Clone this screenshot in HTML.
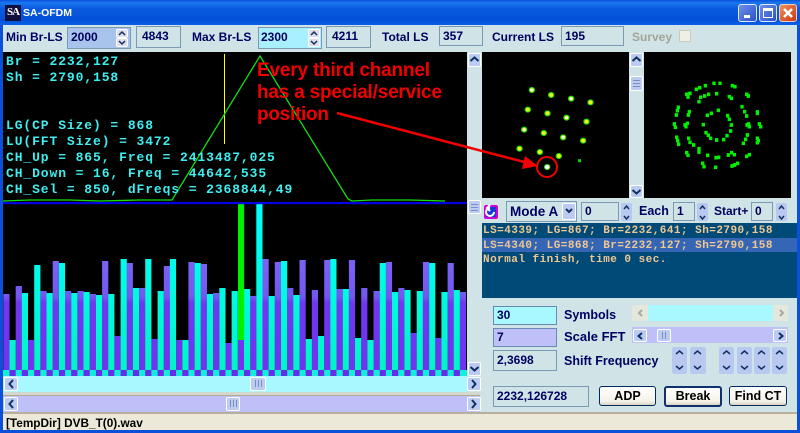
<!DOCTYPE html>
<html><head><meta charset="utf-8"><style>
html,body{margin:0;padding:0;background:#0a50d8}
#w{position:relative;width:800px;height:433px;overflow:hidden;background:#d0e4e8;font:bold 12px "Liberation Sans",sans-serif;color:#000060}
#w div,#w svg{position:absolute}
.t{white-space:nowrap;line-height:14px}
.f{box-sizing:border-box;border:1px solid #7a9ab4;padding-left:5px;white-space:nowrap}
.b{box-sizing:border-box;border:1px solid #fff;border-radius:2px;background:#bccbf2}
.sp{box-sizing:border-box;background:#b8c8f0;border-radius:2px}
.btn{box-sizing:border-box;border:1px solid #002a5c;border-radius:3px;background:linear-gradient(#fff,#f4f2e8 80%,#d8d4c4);color:#000;text-align:center;line-height:19px;font-size:12.5px}
.m{font:bold 13px "Liberation Mono",monospace;letter-spacing:.9px;color:#40eef0;white-space:pre;line-height:16px}
.l{font:bold 11px "Liberation Mono",monospace;letter-spacing:.47px;color:#f0c890;white-space:pre;line-height:14px}
</style></head><body><div id="w">
<div style="left:0;top:0;width:800px;height:25px;background:linear-gradient(#0a50d8 0,#1a78f0 3px,#0a5ce0 8px,#0450d8 20px,#0a60e8 25px)"></div>
<div style="left:0;top:25px;width:3px;height:408px;background:#0a50d8"></div>
<div style="left:797px;top:25px;width:3px;height:408px;background:#0a50d8"></div>
<div style="left:0;top:430px;width:800px;height:3px;background:#0a50d8"></div>
<div style="left:5px;top:5px;width:16px;height:16px;background:#101040;color:#fff;font:bold 11px 'Liberation Serif',serif;line-height:15px;text-align:center;letter-spacing:-1px">SA</div>
<div class="t" style="left:23px;top:6px;color:#fff;font-size:10.5px">SA-OFDM</div>
<div style="left:738px;top:4px;width:19px;height:18px;box-sizing:border-box;border:1px solid #dfe8fb;border-radius:3px;background:linear-gradient(135deg,#6f90ea,#2a50c8)"></div>
<div style="left:744px;top:15px;width:6px;height:3px;background:#fff"></div>
<div style="left:759px;top:4px;width:18px;height:18px;box-sizing:border-box;border:1px solid #dfe8fb;border-radius:3px;background:linear-gradient(135deg,#6f90ea,#2a50c8)"></div>
<div style="left:763px;top:8px;width:10px;height:10px;box-sizing:border-box;border:1px solid #fff;border-top-width:3px"></div>
<div style="left:779px;top:4px;width:18px;height:18px;box-sizing:border-box;border:1px solid #f0d0b8;border-radius:3px;background:linear-gradient(135deg,#f09060,#c83a10)"></div>

<div class="t" style="left:6px;top:30px">Min Br-LS</div>
<div class="f" style="left:67px;top:27px;width:64px;height:22px;background:#a8c4ec;line-height:18px;padding-left:3px">2000</div>
<div class="f" style="left:136px;top:26px;width:45px;height:22px;background:#d0e4e8;line-height:19px">4843</div>
<div class="t" style="left:192px;top:30px">Max Br-LS</div>
<div class="f" style="left:258px;top:27px;width:64px;height:22px;background:#a8f0ff;line-height:18px;padding-left:2px">2300</div>
<div class="f" style="left:326px;top:26px;width:45px;height:22px;background:#d0e4e8;line-height:19px">4211</div>
<div class="t" style="left:382px;top:30px">Total LS</div>
<div class="f" style="left:439px;top:26px;width:44px;height:20px;line-height:18px;padding-left:3px">357</div>
<div class="t" style="left:492px;top:30px">Current LS</div>
<div class="f" style="left:561px;top:26px;width:63px;height:20px;line-height:18px;padding-left:3px">195</div>
<div class="t" style="left:632px;top:30px;color:#a4a498">Survey</div>
<div style="left:679px;top:30px;width:12px;height:12px;box-sizing:border-box;border:1px solid #c8ccc0;background:#eef0e4"></div>
<div class="b" style="left:116px;top:29px;width:12px;height:9px;background:#dde"></div>
<div class="b" style="left:116px;top:38px;width:12px;height:9px;background:#dde"></div>
<div class="b" style="left:308px;top:29px;width:12px;height:9px;background:#dde"></div>
<div class="b" style="left:308px;top:38px;width:12px;height:9px;background:#dde"></div>

<!-- main plots -->
<div style="left:3px;top:52px;width:464px;height:152px;background:#000"></div>
<div style="left:3px;top:204px;width:464px;height:166px;background:#000"></div>
<svg style="left:0;top:0" width="800" height="433">
<defs>
<linearGradient id="pg" gradientUnits="userSpaceOnUse" x1="0" y1="255" x2="0" y2="370"><stop offset="0" stop-color="#7a64f4"/><stop offset=".36" stop-color="#7458f0"/><stop offset=".42" stop-color="#7036f0"/><stop offset="1" stop-color="#7034f0"/></linearGradient>
<linearGradient id="cg" gradientUnits="userSpaceOnUse" x1="0" y1="204" x2="0" y2="370"><stop offset="0" stop-color="#00ffff"/><stop offset=".55" stop-color="#00fae0"/><stop offset="1" stop-color="#00f4c8"/></linearGradient>
</defs>
<path fill="url(#pg)" d="M3.3 294V370h6.2V294zM15.7 286V370h6.2V286zM28 340V370h6.2V340zM40.4 291V370h6.2V291zM52.7 261V370h6.2V261zM65 291V370h6.2V291zM77.4 291V370h6.2V291zM89.7 294V370h6.2V294zM102.1 261V370h6.2V261zM114.4 336V370h6.2V336zM126.7 263V370h6.2V263zM139.1 288V370h6.2V288zM151.4 339V370h6.2V339zM163.8 266V370h6.2V266zM176.1 340V370h6.2V340zM188.4 262V370h6.2V262zM200.8 264V370h6.2V264zM213.1 293V370h6.2V293zM225.5 343V370h6.2V343zM237.8 340V370h6.2V340zM250.1 296V370h6.2V296zM262.5 259V370h6.2V259zM274.8 262V370h6.2V262zM287.2 288V370h6.2V288zM299.5 260V370h6.2V260zM311.8 290V370h6.2V290zM324.2 260V370h6.2V260zM336.5 289V370h6.2V289zM348.9 260V370h6.2V260zM361.2 288V370h6.2V288zM373.5 291V370h6.2V291zM385.9 262V370h6.2V262zM398.2 288V370h6.2V288zM410.6 333V370h6.2V333zM422.9 262V370h6.2V262zM435.2 338V370h6.2V338zM447.6 263V370h6.2V263zM459.9 292V370h6.2V292z"/>
<path fill="url(#cg)" d="M9.5 340V370h6.2V340zM21.8 293V370h6.2V293zM34.2 265V370h6.2V265zM46.5 293V370h6.2V293zM58.9 263V370h6.2V263zM71.2 293V370h6.2V293zM83.5 292V370h6.2V292zM95.9 295V370h6.2V295zM108.2 294V370h6.2V294zM120.6 259V370h6.2V259zM132.9 288V370h6.2V288zM145.2 259V370h6.2V259zM157.6 291V370h6.2V291zM169.9 259V370h6.2V259zM182.3 340V370h6.2V340zM194.6 263V370h6.2V263zM206.9 294V370h6.2V294zM219.3 288V370h6.2V288zM231.6 291V370h6.2V291zM244 289V370h6.2V289zM256.3 204V370h6.2V204zM268.6 296V370h6.2V296zM281 261V370h6.2V261zM293.3 295V370h6.2V295zM305.7 339V370h6.2V339zM318 336V370h6.2V336zM330.3 259V370h6.2V259zM342.7 289V370h6.2V289zM355 338V370h6.2V338zM367.4 340V370h6.2V340zM379.7 263V370h6.2V263zM392 292V370h6.2V292zM404.4 290V370h6.2V290zM416.7 291V370h6.2V291zM429.1 263V370h6.2V263zM441.4 292V370h6.2V292zM453.7 290V370h6.2V290z"/>
<rect x="238" y="204" width="6.2" height="136" fill="#00f000"/>
<!-- checker -->
<rect x="3" y="370" width="464" height="6" fill="#10f0d8"/>
<path fill="#6a2ce8" d="M9.5 370h6.2v6h-6.2zM21.8 370h6.2v6h-6.2zM34.2 370h6.2v6h-6.2zM46.5 370h6.2v6h-6.2zM58.9 370h6.2v6h-6.2zM71.2 370h6.2v6h-6.2zM83.5 370h6.2v6h-6.2zM95.9 370h6.2v6h-6.2zM108.2 370h6.2v6h-6.2zM120.6 370h6.2v6h-6.2zM132.9 370h6.2v6h-6.2zM145.2 370h6.2v6h-6.2zM157.6 370h6.2v6h-6.2zM169.9 370h6.2v6h-6.2zM182.3 370h6.2v6h-6.2zM194.6 370h6.2v6h-6.2zM206.9 370h6.2v6h-6.2zM219.3 370h6.2v6h-6.2zM231.6 370h6.2v6h-6.2zM244 370h6.2v6h-6.2zM256.3 370h6.2v6h-6.2zM268.6 370h6.2v6h-6.2zM281 370h6.2v6h-6.2zM293.3 370h6.2v6h-6.2zM305.7 370h6.2v6h-6.2zM318 370h6.2v6h-6.2zM330.3 370h6.2v6h-6.2zM342.7 370h6.2v6h-6.2zM355 370h6.2v6h-6.2zM367.4 370h6.2v6h-6.2zM379.7 370h6.2v6h-6.2zM392 370h6.2v6h-6.2zM404.4 370h6.2v6h-6.2zM416.7 370h6.2v6h-6.2zM429.1 370h6.2v6h-6.2zM441.4 370h6.2v6h-6.2zM453.7 370h6.2v6h-6.2z"/>
<rect x="3" y="202" width="464" height="2.2" fill="#0000e0"/>
<line x1="224.5" y1="54" x2="224.5" y2="144" stroke="#ffff00" stroke-width="1"/>
<polyline fill="none" stroke="#10e010" stroke-width="1.3" points="3,201 30,200 70,200 100,201 140,200 172,200 260,56 348,199 352,201 372,200 410,200 445,201"/>
</svg>
<div class="m" style="left:6px;top:54px">Br = 2232,127
Sh = 2790,158


LG(CP Size) = 868
LU(FFT Size) = 3472
CH_Up = 865, Freq = 2413487,025
CH_Down = 16, Freq = 44642,535
CH_Sel = 850, dFreqs = 2368844,49</div>

<!-- vertical scrollbars -->
<div style="left:467px;top:52px;width:14px;height:324px;background:#d0e4e8"></div>
<div class="b" style="left:468px;top:53px;width:13px;height:14px"></div>
<div class="b" style="left:468px;top:200px;width:13px;height:14px"></div>
<div class="b" style="left:468px;top:362px;width:13px;height:14px"></div>
<div style="left:629px;top:52px;width:15px;height:146px;background:#d0e4e8"></div>
<div class="b" style="left:630px;top:53px;width:13px;height:14px"></div>
<div class="b" style="left:630px;top:76px;width:13px;height:15px"></div>
<div class="b" style="left:630px;top:185px;width:13px;height:13px"></div>

<!-- constellations -->
<div style="left:482px;top:52px;width:147px;height:146px;background:#000"></div>
<div style="left:644px;top:52px;width:147px;height:146px;background:#000"></div>
<svg style="left:480px;top:50px" width="320" height="150" viewBox="0 0 960 450">
<path fill="none" stroke="#20e000" stroke-width="18" stroke-linecap="round" d="M155 120h1M213 135h1M273 146h1M331 157h1M143 179h1M202 190h1M259 203h1M319 215h1M132 239h1M191 249h1M249 262h1M309 272h1M118 296h1M179 306h1M236 318h1M201 351h1"/>
<path fill="none" stroke="#f0f020" stroke-width="11" stroke-linecap="round" d="M155 120h1M213 135h1M273 146h1M331 157h1M143 179h1M202 190h1M259 203h1M319 215h1M132 239h1M191 249h1M249 262h1M309 272h1M118 296h1M179 306h1M236 318h1"/>
<path fill="none" stroke="#ffffff" stroke-width="8" stroke-linecap="round" d="M155 120h1M273 146h1M259 203h1M249 262h1M132 239h1"/>
<path fill="none" stroke="#ffffff" stroke-width="13" stroke-linecap="round" d="M201 351h1"/>
<path fill="none" stroke="#10d010" stroke-width="9" d="M294 332h9"/>
<path fill="none" stroke="#00f000" stroke-width="11" d="M697 100h10M715 100h10M671 107h10M654 113h10M644 118h10M752 107h10M760 110h10M615 133h10M625 130h10M619 141h10M669 138h10M681 133h10M705 131h10M795 133h10M800 138h10M743 140h10M749 145h10M652 155h10M657 142h10M781 170h10M789 185h10M795 198h10M827 186h10M827 190h10M710 181h10M677 196h10M689 190h10M623 185h10M620 195h10M590 172h10M587 182h10M584 195h10M738 197h10M743 208h10M749 225h10M578 222h10M581 232h10M610 225h10M617 220h10M613 230h10M665 224h10M796 225h10M803 230h10M801 222h10M833 222h10M837 230h10M673 248h10M680 256h10M687 265h10M747 243h10M736 257h10M726 269h10M705 270h10M585 262h10M588 272h10M591 283h10M621 265h10M625 277h10M636 285h10M797 255h10M792 268h10M785 280h10M827 265h10M830 272h10M827 278h10M652 296h10M652 306h10M615 308h10M619 316h10M678 316h10M703 323h10M711 322h10M740 315h10M750 308h10M758 314h10M795 319h10M803 314h10M663 340h10M667 350h10M702 352h10M751 348h10M759 345h10M768 340h10"/>
</svg>

<!-- middle control row -->
<div style="left:484px;top:205px;width:14px;height:14px;box-sizing:border-box;border:2px solid #d000d0;background:#1838d8;border-radius:2px"></div>
<div class="f" style="left:506px;top:201px;width:71px;height:21px;background:#d0e4e8;line-height:19px;font-size:13.5px;padding-left:3px">Mode A</div>
<div class="b" style="left:562px;top:203px;width:14px;height:17px"></div>
<div class="f" style="left:581px;top:202px;width:38px;height:19px;line-height:17px;padding-left:3px">0</div>
<div class="sp" style="left:621px;top:203px;width:11px;height:18px"></div>
<div class="t" style="left:639px;top:204px;font-size:12.5px">Each</div>
<div class="f" style="left:673px;top:202px;width:22px;height:19px;line-height:17px;padding-left:3px">1</div>
<div class="sp" style="left:697px;top:203px;width:11px;height:18px"></div>
<div class="t" style="left:714px;top:204px">Start+</div>
<div class="f" style="left:751px;top:202px;width:22px;height:19px;line-height:17px;padding-left:3px">0</div>
<div class="sp" style="left:776px;top:203px;width:11px;height:18px"></div>

<!-- log -->
<div style="left:482px;top:223px;width:315px;height:75px;background:#004a78"></div>
<div style="left:482px;top:238px;width:315px;height:14px;background:#3565b5"></div>
<div class="l" style="left:483px;top:224px">LS=4339; LG=867; Br=2232,641; Sh=2790,158</div>
<div class="l" style="left:483px;top:239px">LS=4340; LG=868; Br=2232,127; Sh=2790,158</div>
<div class="l" style="left:483px;top:253px">Normal finish, time 0 sec.</div>

<!-- bottom right -->
<div class="f" style="left:493px;top:306px;width:64px;height:19px;background:#a8f8ff;border-color:#6a8ab4;line-height:17px;padding-left:3px">30</div>
<div class="f" style="left:493px;top:328px;width:64px;height:19px;background:#c0c0f8;border-color:#6a8ab4;line-height:17px;padding-left:3px">7</div>
<div class="f" style="left:493px;top:350px;width:64px;height:21px;line-height:18px;padding-left:3px">2,3698</div>
<div class="f" style="left:493px;top:386px;width:96px;height:21px;line-height:19px;padding-left:3px">2232,126728</div>
<div class="t" style="left:564px;top:308px;font-size:12.5px">Symbols</div>
<div class="t" style="left:564px;top:330px;font-size:13px">Scale FFT</div>
<div class="t" style="left:564px;top:354px;font-size:12.5px">Shift Frequency</div>
<div style="left:632px;top:305px;width:156px;height:16px;background:#e4e8dc"></div>
<div style="left:648px;top:305px;width:125px;height:16px;background:#a8f8ff"></div>
<div style="left:632px;top:327px;width:156px;height:16px;background:#c0c0f8"></div>
<div class="b" style="left:633px;top:329px;width:14px;height:13px"></div>
<div class="b" style="left:657px;top:329px;width:14px;height:13px"></div>
<div class="b" style="left:773px;top:329px;width:14px;height:13px"></div>
<div class="sp" style="left:672px;top:347px;width:15px;height:27px"></div>
<div class="sp" style="left:690px;top:347px;width:16px;height:27px"></div>
<div class="sp" style="left:719px;top:347px;width:15px;height:27px"></div>
<div class="sp" style="left:737px;top:347px;width:15px;height:27px"></div>
<div class="sp" style="left:754px;top:347px;width:16px;height:27px"></div>
<div class="sp" style="left:772px;top:347px;width:15px;height:27px"></div>
<div class="btn" style="left:599px;top:386px;width:57px;height:20px">ADP</div>
<div class="btn" style="left:664px;top:386px;width:58px;height:21px;border-width:2px;border-color:#103070;line-height:17px">Break</div>
<div class="btn" style="left:729px;top:386px;width:58px;height:20px">Find CT</div>

<!-- horizontal scrolls -->
<div style="left:3px;top:376px;width:464px;height:16px;background:#a8f8ff"></div>
<div style="left:3px;top:392px;width:477px;height:4px;background:#d0d8d0;border-bottom:1px solid #b8a890;box-sizing:border-box"></div>
<div style="left:3px;top:396px;width:477px;height:16px;background:#c0c0f8"></div>
<div class="b" style="left:4px;top:377px;width:14px;height:14px"></div>
<div class="b" style="left:250px;top:377px;width:16px;height:14px"></div>
<div class="b" style="left:467px;top:377px;width:14px;height:14px"></div>
<div class="b" style="left:4px;top:397px;width:14px;height:14px"></div>
<div class="b" style="left:226px;top:397px;width:14px;height:14px"></div>
<div class="b" style="left:467px;top:397px;width:14px;height:14px"></div>

<!-- status -->
<div style="left:3px;top:412px;width:794px;height:2px;background:#b8b09c"></div>
<div style="left:3px;top:414px;width:794px;height:16px;background:#ece9d8"></div>
<div class="t" style="left:6px;top:416px;color:#000;font-size:11.8px">[TempDir] DVB_T(0).wav</div>

<!-- chevrons -->
<svg style="left:0;top:0" width="800" height="433">
<path fill="none" stroke="#103060" stroke-width="2" d="M470.5 61l4-3.500 4 3.500M632.5 61l4-3.500 4 3.500M470.5 367l4 3.500 4-3.500M632.5 190l4 3.500 4-3.500M13 380l-3.500 4 3.500 4M13 400l-3.500 4 3.500 4M472 380l3.500 4-3.500 4M472 400l3.500 4-3.500 4M566 209l3 3 3-3M642 333l-3.500 3 3.500 3M779 333l3.500 3-3.500 3"/>
<path fill="none" stroke="#a8a8a0" stroke-width="2" d="M642 310l-3 3 3 3M780 310l3 3-3 3"/>
<path fill="none" stroke="#103060" stroke-width="1.5" d="M119 35l3-3 3 3M119 41l3 3 3-3M311 35l3-3 3 3M311 41l3 3 3-3M624 209l2.500-3 2.500 3M624 216l2.500 3 2.500-3M700 209l2.500-3 2.500 3M700 216l2.500 3 2.500-3M779 209l2.500-3 2.500 3M779 216l2.500 3 2.500-3M676 354l3.500-3 3.500 3M676 366l3.500 3 3.500-3M694 354l3.500-3 3.500 3M694 366l3.500 3 3.500-3M723 354l3.500-3 3.500 3M723 366l3.500 3 3.500-3M741 354l3.500-3 3.500 3M741 366l3.500 3 3.500-3M758 354l3.500-3 3.500 3M758 366l3.500 3 3.500-3M776 354l3.500-3 3.500 3M776 366l3.500 3 3.500-3"/>
<path fill="none" stroke="#7a8cc0" stroke-width="1" d="M471 204.500h7M471 207.500h7M471 210.500h7M633 80.500h7M633 83.500h7M633 86.500h7M255.500 380v7M258.500 380v7M261.500 380v7M230.500 400v7M233.500 400v7M236.500 400v7M662.500 332v7M665.500 332v7"/>
<path fill="none" stroke="#fff" stroke-width="2.5" d="M784 9l8 8M792 9l-8 8"/>
<path fill="none" stroke="#fff" stroke-width="2" d="M494 212a4 4 0 1 1-4-4h-2M490 205l-3 3 3 3"/>
<!-- annotation -->
<path fill="none" stroke="#f00000" stroke-width="2.500" d="M337 113L528 163"/>
<path fill="#f00000" d="M538 166L525 156L522 169z"/>
<circle cx="547" cy="167" r="10" fill="none" stroke="#f00000" stroke-width="2"/>
<text x="257" y="76" fill="#f00000" font-family="Liberation Sans" font-weight="bold" font-size="19" textLength="173">Every third channel</text>
<text x="257" y="98" fill="#f00000" font-family="Liberation Sans" font-weight="bold" font-size="19" textLength="185">has a special/service</text>
<text x="257" y="120" fill="#f00000" font-family="Liberation Sans" font-weight="bold" font-size="19" textLength="72">position</text>
</svg>
</div></body></html>
